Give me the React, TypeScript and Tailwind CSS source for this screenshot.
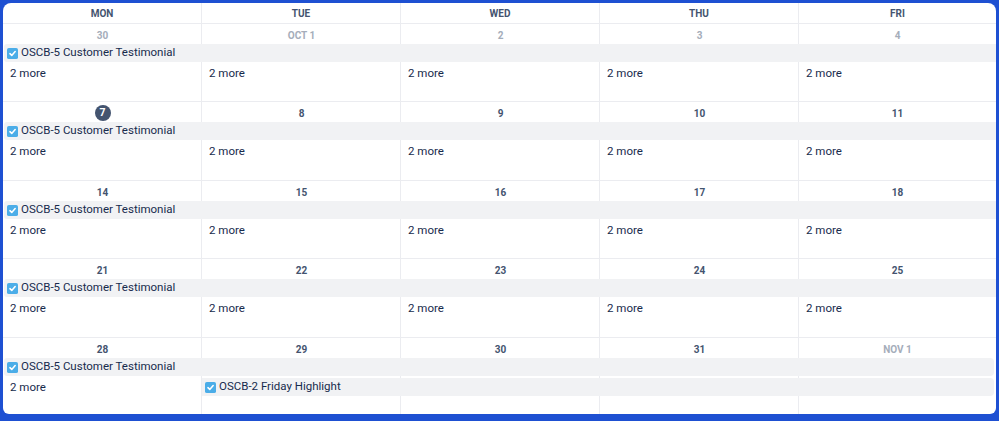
import React from "react";

type Day = { label: string; muted?: boolean; today?: boolean };
type Bar = { title: string; col: number; span: number; row: number; end?: boolean };
type Week = { days: Day[]; bars: Bar[]; more: number[]; height: string };

const weeks: Week[] = [
  {
    days: [
      { label: "30", muted: true },
      { label: "OCT 1", muted: true },
      { label: "2", muted: true },
      { label: "3", muted: true },
      { label: "4", muted: true },
    ],
    bars: [{ title: "OSCB-5 Customer Testimonial", col: 1, span: 5, row: 2 }],
    more: [1, 2, 3, 4, 5],
    height: "h-[78px]",
  },
  {
    days: [{ label: "7", today: true }, { label: "8" }, { label: "9" }, { label: "10" }, { label: "11" }],
    bars: [{ title: "OSCB-5 Customer Testimonial", col: 1, span: 5, row: 2 }],
    more: [1, 2, 3, 4, 5],
    height: "h-[79px]",
  },
  {
    days: [{ label: "14" }, { label: "15" }, { label: "16" }, { label: "17" }, { label: "18" }],
    bars: [{ title: "OSCB-5 Customer Testimonial", col: 1, span: 5, row: 2 }],
    more: [1, 2, 3, 4, 5],
    height: "h-[78px]",
  },
  {
    days: [{ label: "21" }, { label: "22" }, { label: "23" }, { label: "24" }, { label: "25" }],
    bars: [{ title: "OSCB-5 Customer Testimonial", col: 1, span: 5, row: 2 }],
    more: [1, 2, 3, 4, 5],
    height: "h-[79px]",
  },
  {
    days: [{ label: "28" }, { label: "29" }, { label: "30" }, { label: "31" }, { label: "NOV 1", muted: true }],
    bars: [
      { title: "OSCB-5 Customer Testimonial", col: 1, span: 5, row: 2, end: true },
      { title: "OSCB-2 Friday Highlight", col: 2, span: 4, row: 4, end: true },
    ],
    more: [1],
    height: "flex-1",
  },
];

const colStart = ["", "col-start-1", "col-start-2", "col-start-3", "col-start-4", "col-start-5"];
const colSpan = ["", "col-span-1", "col-span-2", "col-span-3", "col-span-4", "col-span-5"];
const rowStart = ["", "row-start-1", "row-start-2", "row-start-3", "row-start-4", "row-start-5"];

function TaskIcon() {
  return (
    <svg width="11" height="11" viewBox="0 0 12 12" className="shrink-0">
      <rect x="0" y="0" width="12" height="12" rx="2" fill="#4bade8" />
      <path d="M3.2 6.2 L5.2 8.1 L8.9 3.9" stroke="#fff" strokeWidth="1.7" fill="none" strokeLinecap="round" strokeLinejoin="round" />
    </svg>
  );
}

function WeekRow({ week, last }: { week: Week; last: boolean }) {
  return (
    <div
      className={`grid shrink-0 grid-cols-[199px_199px_199px_199px_1fr] grid-rows-[20px_18px_2px_18px_1fr] overflow-hidden ${week.height} ${
        last ? "" : "border-b border-[#ebecf0]"
      }`}
    >
      {week.days.map((_, i) => (
        <div
          key={"bg" + i}
          className={`${colStart[i + 1]} row-span-full row-start-1 ${i < 4 ? "border-r border-[#ebecf0]" : ""}`}
        />
      ))}
      {week.days.map((d, i) => (
        <div key={"d" + i} className={`${colStart[i + 1]} row-start-1 flex items-center justify-center pt-[2px]`}>
          {d.today ? (
            <span className="flex h-4 w-4 items-center justify-center rounded-full bg-[#44546f] text-[10.5px] font-bold text-white">
              {d.label}
            </span>
          ) : (
            <span className={`text-[10px] font-bold ${d.muted ? "text-[#a5adba]" : "text-[#44546f]"}`}>{d.label}</span>
          )}
        </div>
      ))}
      {week.bars.map((b, i) => (
        <div
          key={"b" + i}
          className={`${colStart[b.col]} ${colSpan[b.span]} ${rowStart[b.row]} flex items-center gap-[3px] bg-[#f1f2f4] text-[11.5px] text-[#172b4d] ${
            b.col === 1 ? "ml-px rounded-l-[3px] pl-[3px]" : "pl-[3px]"
          } ${b.end ? "mr-[2px] rounded-r-[4px]" : ""}`}
        >
          <TaskIcon />
          <span className="leading-none">{b.title}</span>
        </div>
      ))}
      {week.more.map((c) => (
        <div key={"m" + c} className={`${colStart[c]} row-start-4 flex items-center pl-[7px] pt-px text-[11.5px] text-[#172b4d]`}>
          2 more
        </div>
      ))}
    </div>
  );
}

export default function App() {
  const headers = ["MON", "TUE", "WED", "THU", "FRI"];
  return (
    <div
      className="h-[421px] w-[999px] bg-[#1e50d2] pt-[3px] pr-[3px] pb-[7px] pl-[3px]"
      style={{ fontFamily: "Roboto, 'Noto Sans', sans-serif" }}
    >
      <div className="flex h-full flex-col overflow-hidden rounded-t-[8px] rounded-b-[6px] bg-white">
        <div className="grid h-[21px] shrink-0 grid-cols-[199px_199px_199px_199px_1fr] border-b border-[#ebecf0]">
          {headers.map((h, i) => (
            <div
              key={h}
              className={`flex items-center justify-center text-[10px] font-bold text-[#44546f] ${
                i < 4 ? "border-r border-[#ebecf0]" : ""
              }`}
            >
              {h}
            </div>
          ))}
        </div>
        {weeks.map((w, i) => (
          <WeekRow key={i} week={w} last={i === weeks.length - 1} />
        ))}
      </div>
    </div>
  );
}
